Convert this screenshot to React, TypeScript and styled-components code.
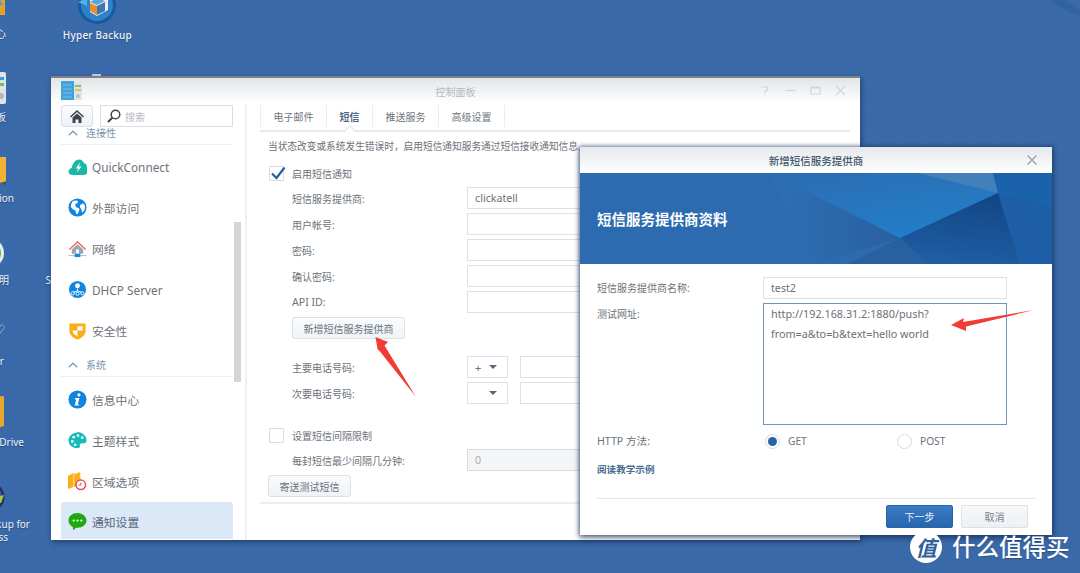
import React from "react";
import styled, { createGlobalStyle } from "styled-components";

const FONT = `"Noto Sans", "Noto Sans CJK SC", "Liberation Sans", sans-serif`;

const Global = createGlobalStyle`
  html, body { margin: 0; padding: 0; width: 1080px; height: 573px; overflow: hidden; }
  body { font-family: ${FONT}; }
`;

const Desktop = styled.div`
  position: relative;
  width: 1080px;
  height: 573px;
  overflow: hidden;
  background-color: #3a6aa9;
  background-image: radial-gradient(#3666a5 0.6px, transparent 0.8px);
  background-size: 3px 3px;
`;

const Glyph = styled.svg<{ $x: number; $y: number }>`
  position: absolute;
  left: ${(p) => p.$x}px;
  top: ${(p) => p.$y}px;
`;

const DeskLabel = styled.div<{ $end: number; $y: number }>`
  position: absolute;
  left: ${(p) => p.$end - 120}px;
  top: ${(p) => p.$y}px;
  width: 120px;
  text-align: right;
  color: #eef3fa;
  font-size: 10px;
  line-height: 14px;
  white-space: nowrap;
  text-shadow: 0 1px 1px rgba(20, 40, 80, 0.5);
`;

const HyperLabel = styled(DeskLabel)`
  letter-spacing: 0.2px;
  font-weight: 500;
`;

const Win = styled.section`
  position: absolute;
  left: 51px;
  top: 76px;
  width: 809px;
  height: 464px;
  display: flex;
  flex-direction: column;
  background: #fff;
  border-top: 2px solid #7f8184;
  box-shadow: 1px 2px 5px rgba(15, 30, 60, 0.55);
  box-sizing: border-box;
  overflow: hidden;
`;

const TitleBar = styled.header`
  position: relative;
  flex: 0 0 26px;
  display: flex;
  align-items: center;
  justify-content: center;
  background: linear-gradient(#e2e5e9, #ffffff 95%);
`;

const WinTitle = styled.span`
  font-size: 10px;
  color: #b4b8bd;
`;

const AppIcon = styled.svg`
  position: absolute;
  left: 10px;
  top: 3px;
`;

const WinControls = styled.div`
  position: absolute;
  top: 7px;
  right: 14px;
  display: flex;
  gap: 14px;
`;

const Body = styled.div`
  flex: 1;
  display: flex;
  min-height: 0;
`;

const Sidebar = styled.aside`
  position: relative;
  flex: 0 0 196px;
  box-sizing: border-box;
  padding: 1px 12px 1px 10px;
  border-right: 2px solid #eff0f2;
  display: flex;
  flex-direction: column;
  overflow: hidden;
`;

const SearchRow = styled.div`
  display: flex;
  gap: 7px;
  flex: 0 0 22px;
  position: relative;
  z-index: 1;
`;

const HomeButton = styled.div`
  flex: 0 0 32px;
  box-sizing: border-box;
  border: 1px solid #d9e0e8;
  border-radius: 3px;
  background: linear-gradient(#fafbfc, #eef2f6);
  display: flex;
  align-items: center;
  justify-content: center;
`;

const SearchBox = styled.div`
  flex: 1;
  box-sizing: border-box;
  border: 1px solid #d7dee6;
  background: #fff;
  display: flex;
  align-items: center;
  gap: 4px;
  padding-left: 6px;
  font-size: 10px;
  color: #b5b9bf;
`;

const NavList = styled.nav`
  flex: 1;
  min-height: 0;
  overflow: hidden;
  display: flex;
  flex-direction: column;
`;

const GroupHead = styled.div<{ $h: number; $mb: number }>`
  flex: 0 0 ${(p) => p.$h}px;
  box-sizing: border-box;
  display: flex;
  align-items: flex-end;
  gap: 8px;
  padding: 0 0 5px 7px;
  margin-bottom: ${(p) => p.$mb}px;
  border-bottom: 1px solid #eceff3;
  font-size: 10px;
  line-height: 12px;
  color: #7d93ad;
`;

const NavItem = styled.div<{ $active?: boolean }>`
  flex: 0 0 41px;
  box-sizing: border-box;
  display: flex;
  align-items: center;
  gap: 5px;
  padding-left: 7px;
  padding-bottom: ${(p) => (p.$active ? 2 : 0)}px;
  border-radius: 3px 3px 0 0;
  font-size: 11.8px;
  color: ${(p) => (p.$active ? "#566779" : "#6d7279")};
  background: ${(p) => (p.$active ? "#dbe8f8" : "transparent")};
`;

const ScrollThumb = styled.div`
  position: absolute;
  left: 183px;
  top: 118px;
  width: 7px;
  height: 160px;
  background: #d4d5d7;
`;

const Panel = styled.main`
  flex: 1;
  min-width: 0;
  padding: 0 10px 0 13px;
  display: flex;
  flex-direction: column;
`;

const TabBar = styled.div`
  flex: 0 0 28px;
  box-sizing: border-box;
  display: flex;
  border-bottom: 2px solid #e8e9eb;
`;

const Tab = styled.div<{ $w: number; $active?: boolean }>`
  position: relative;
  flex: 0 0 ${(p) => p.$w}px;
  height: 22px;
  margin-top: 1px;
  display: flex;
  align-items: center;
  justify-content: center;
  border-left: 1px solid #e9edf2;
  box-sizing: content-box;
  font-size: 10px;
  color: ${(p) => (p.$active ? "#4a6684" : "#6f767e")};
  font-weight: ${(p) => (p.$active ? 700 : 400)};
  &:last-child { border-right: 1px solid #e9edf2; }
  ${(p) =>
    p.$active
      ? `&::after {
          content: "";
          position: absolute;
          left: 50%;
          bottom: -6px;
          width: 7px;
          height: 7px;
          margin-left: -4px;
          background: #fff;
          border-left: 1px solid #e3e5e8;
          border-top: 1px solid #e3e5e8;
          transform: translateY(2px) rotate(45deg);
        }`
      : ""}
`;

const PanelContent = styled.div`
  padding-left: 8px;
  display: flex;
  flex-direction: column;
  overflow: hidden;
  white-space: nowrap;
`;

const Description = styled.p`
  margin: 8px 0 0;
  font-size: 9.7px;
  line-height: 14px;
  color: #6d7279;
`;

const CheckRow = styled.label<{ $mt: number }>`
  display: flex;
  align-items: center;
  gap: 8px;
  margin-top: ${(p) => p.$mt}px;
  height: 16px;
  font-size: 10px;
  color: #6d7279;
  padding-left: 1px;
`;

const CheckBox = styled.span`
  position: relative;
  flex: 0 0 15px;
  height: 15px;
  box-sizing: border-box;
  border: 1px solid #d4dbe4;
  border-radius: 1px;
  background: #fff;
`;

const CheckMark = styled.svg`
  position: absolute;
  left: 0;
  top: -2px;
`;

const FieldStack = styled.div<{ $mt: number }>`
  display: flex;
  flex-direction: column;
  gap: 4px;
  margin-top: ${(p) => p.$mt}px;
`;

const FieldRow = styled.div`
  display: grid;
  grid-template-columns: 175px auto;
  align-items: center;
  padding-left: 24px;
  height: 22px;
  font-size: 10px;
  color: #6d7279;
`;

const Latin = styled.span`
  font-size: 10.6px;
`;

const Controls = styled.div`
  display: flex;
  gap: 12px;
`;

const TextInput = styled.div<{ $disabled?: boolean; $w?: number }>`
  width: ${(p) => p.$w ?? 240}px;
  height: 22px;
  box-sizing: border-box;
  border: 1px solid ${(p) => (p.$disabled ? "#d7dbe0" : "#dbe2ea")};
  background: ${(p) => (p.$disabled ? "#f3f5f7" : "#fff")};
  color: ${(p) => (p.$disabled ? "#a9aeb4" : "#6a7077")};
  font-size: 10.7px;
  line-height: 20px;
  padding-left: 7px;
`;

const SelectBox = styled.div`
  flex: 0 0 41px;
  height: 22px;
  box-sizing: border-box;
  border: 1px solid #dbe2ea;
  display: flex;
  align-items: center;
  justify-content: space-between;
  padding: 0 10px 0 7px;
  font-size: 11px;
  color: #6a7077;
  &::after {
    content: "";
    margin-left: auto;
    border-left: 4px solid transparent;
    border-right: 4px solid transparent;
    border-top: 4px solid #56687c;
  }
`;

const Button = styled.div<{ $w: number; $ml?: number; $mt: number }>`
  width: ${(p) => p.$w}px;
  height: 22px;
  box-sizing: border-box;
  margin-left: ${(p) => p.$ml ?? 0}px;
  margin-top: ${(p) => p.$mt}px;
  border: 1px solid #d9e1e9;
  border-radius: 3px;
  background: linear-gradient(#fafbfc, #eff3f7);
  display: flex;
  align-items: center;
  justify-content: center;
  font-size: 10px;
  color: #68717b;
`;

const PanelDivider = styled.div`
  height: 2px;
  margin-top: 5px;
  background: #eceded;
`;

const Dialog = styled.section`
  position: absolute;
  left: 580px;
  top: 147px;
  width: 472px;
  height: 388px;
  background: #fff;
  display: flex;
  flex-direction: column;
  box-shadow: 0 0 4px 1px rgba(20, 45, 90, 0.6), 0 3px 6px rgba(15, 30, 60, 0.45);
`;

const DialogHeader = styled.header`
  position: relative;
  flex: 0 0 26px;
  display: flex;
  align-items: center;
  justify-content: center;
  background: linear-gradient(#e6e9ed, #ffffff);
  font-size: 10.5px;
  font-weight: 500;
  color: #42566d;
`;

const CloseIcon = styled.svg`
  position: absolute;
  right: 14px;
  top: 7px;
`;

const Banner = styled.div`
  position: relative;
  flex: 0 0 91px;
  display: flex;
  align-items: center;
  padding-left: 17px;
  background: #2c6bb0;
  overflow: hidden;
`;

const BannerArt = styled.svg`
  position: absolute;
  inset: 0;
`;

const BannerTitle = styled.h2`
  position: relative;
  margin: 0;
  color: #fff;
  font-size: 14.5px;
  font-weight: 700;
`;

const DialogForm = styled.div`
  padding: 13px 16px 0 17px;
  display: flex;
  flex-direction: column;
  gap: 4px;
`;

const DialogRow = styled.div<{ $top?: boolean; $mt?: number }>`
  display: grid;
  grid-template-columns: 166px auto;
  align-items: ${(p) => (p.$top ? "start" : "center")};
  margin-top: ${(p) => p.$mt ?? 0}px;
  font-size: 10px;
  color: #6d7279;
  line-height: 22px;
`;

const UrlArea = styled.div`
  width: 244px;
  height: 122px;
  box-sizing: border-box;
  border: 1px solid #6f93bd;
  padding: 0 7px;
  font-size: 10.8px;
  line-height: 20px;
  color: #6a7077;
  white-space: nowrap;
`;

const RadioGroup = styled.div`
  display: grid;
  grid-template-columns: 132px auto;
  padding-left: 2px;
`;

const RadioItem = styled.div`
  display: flex;
  align-items: center;
  gap: 8px;
  height: 15px;
  font-size: 10.2px;
  color: #6d7279;
`;

const Radio = styled.span<{ $on?: boolean }>`
  flex: 0 0 15px;
  height: 15px;
  box-sizing: border-box;
  border: 1px solid #d3dbe5;
  border-radius: 50%;
  background: #fff;
  display: flex;
  align-items: center;
  justify-content: center;
  &::after {
    content: "";
    width: 9px;
    height: 9px;
    border-radius: 50%;
    background: ${(p) => (p.$on ? "#2b62a6" : "transparent")};
  }
`;

const HelpLink = styled.a`
  display: block;
  margin-top: 7px;
  font-size: 9.6px;
  font-weight: 700;
  line-height: 14px;
  color: #4a6d92;
`;

const DialogFooter = styled.footer`
  margin: 21px 16px 0 17px;
  padding: 6px 8px 0 0;
  border-top: 1px solid #e6e7e9;
  display: flex;
  justify-content: flex-end;
  gap: 8px;
`;

const FooterButton = styled.div<{ $primary?: boolean }>`
  width: 67px;
  height: 23px;
  box-sizing: border-box;
  border-radius: 2px;
  border: 1px solid ${(p) => (p.$primary ? "#2862a8" : "#dbe1e8")};
  background: ${(p) =>
    p.$primary ? "linear-gradient(#3b7cc6, #2766ae)" : "linear-gradient(#f7f8fa, #edf0f4)"};
  color: ${(p) => (p.$primary ? "#e9f1fa" : "#777e86")};
  font-size: 10px;
  display: flex;
  align-items: center;
  justify-content: center;
`;

const Overlay = styled.svg`
  position: absolute;
  left: 0;
  top: 0;
  pointer-events: none;
`;

const Watermark = styled.div`
  position: absolute;
  left: 910px;
  top: 531px;
  display: flex;
  align-items: center;
  gap: 10px;
  color: #fff;
`;

const WatermarkBadge = styled.span`
  flex: 0 0 32px;
  height: 32px;
  border-radius: 50%;
  background: #fff;
  color: #2f5f9f;
  display: flex;
  align-items: center;
  justify-content: center;
  font-size: 21px;
  font-weight: 700;
  font-style: italic;
`;

const WatermarkText = styled.span`
  font-size: 23.5px;
  line-height: 30px;
  font-weight: 500;
  letter-spacing: 0;
  text-shadow: 0 1px 1px rgba(20, 40, 80, 0.4);
`;

/* ---------- icons ---------- */

const ChevronUp = () => (
  <svg width="10" height="6" viewBox="0 0 10 6" style={{ marginBottom: 3 }}>
    <path d="M0.8 5.2 5 1.2 9.2 5.2" fill="none" stroke="#7d9ab8" strokeWidth="1.2" />
  </svg>
);

const icons: Record<string, React.ReactNode> = {
  quick: (
    <>
      <path d="M5 19c-3.5 0-4.600-2-4.400-4 .2-2 1.600-3 3.200-3.400C4.500 7 7.600 2.500 11.500 2.500c3 0 5 2 5.500 4.300 2.600-.1 2.800 2 2.600 3.200 1.200 1 1.800 2.400 1.600 4.400-.3 2.800-2 4.600-4.600 4.600z" fill="#1bb8a8" />
      <path d="M12.600 5.800 8.200 12h2.600l-1.400 4.400 4.800-6.400h-2.800z" fill="#fff" />
    </>
  ),
  globe: (
    <>
      <circle cx="10" cy="10" r="9.500" fill="#0f85e0" />
      <path d="M5 3.500c2-1 4.500-1 5.500 0l-.5 2-2 .5-.5 2 1.500 2 2.500.5.5 2.500-2 4-1.500-.5-.5-3-2.500-1.500L3 9.500 3.500 6z" fill="#fff" />
      <path d="M13 7l3-1.500 2 3-.5 4-2.500 3-1-3.500-1.500-2.500z" fill="#fff" />
    </>
  ),
  net: (
    <>
      <path d="M1 10.500 10 2l9 8.500-1 1L10 4 2 11.500z" fill="#f25a5a" />
      <path d="M4 11l6-5.500 6 5.500v4.500H4z" fill="#9aa6b2" />
      <rect x="8.500" y="11" width="3" height="4.500" fill="#fff" />
      <rect x="0.500" y="17" width="19" height="1" fill="#a9b7c6" />
      <rect x="7" y="15.500" width="6" height="3.500" fill="#1b86dc" />
    </>
  ),
  dhcp: (
    <>
      <circle cx="10" cy="10" r="9" fill="#0f85e0" />
      <circle cx="10" cy="6" r="2.600" fill="#fff" />
      <path d="M10 9v3M10 11.500 5.500 13M10 11.500l4.500 1.500" stroke="#fff" strokeWidth="1" fill="none" />
      <circle cx="5" cy="14" r="1.700" fill="none" stroke="#fff" strokeWidth="0.900" />
      <circle cx="10" cy="14.500" r="1.700" fill="none" stroke="#fff" strokeWidth="0.900" />
      <circle cx="15" cy="14" r="1.700" fill="none" stroke="#fff" strokeWidth="0.900" />
    </>
  ),
  shield: (
    <>
      <path d="M1.500 2.500h17v8c0 4-4 7.500-8.500 9-4.500-1.500-8.500-5-8.500-9z" fill="#fbae17" />
      <path d="M10 5.500h5.500v4.500H10zM10 10H5v1.500c.6 2 2.800 3.500 5 4.500z" fill="#fff" />
    </>
  ),
  info: (
    <>
      <circle cx="10" cy="10" r="9.500" fill="#0f85e0" />
      <circle cx="11.500" cy="5.200" r="1.700" fill="#fff" />
      <path d="M7.500 8.500h4.500l-1.700 6.500h1.500l-.4 1.400H7l1.700-6.500H7.200z" fill="#fff" />
    </>
  ),
  palette: (
    <>
      <path d="M10 1.500C4.500 1.500 .5 5.500 .5 10s4 8 9 8c2.500 0 3.500-1 3-2.500-.5-1.500.5-2.500 2-2.500h2c1.800 0 3-1 3-3.500 0-4.500-4.500-8.500-9.500-8.500z" fill="#14bcb8" />
      <circle cx="6" cy="6.500" r="1.400" fill="#fff" />
      <circle cx="10.500" cy="4.800" r="1.400" fill="#fff" />
      <circle cx="15" cy="7" r="1.400" fill="#fff" />
      <circle cx="4.500" cy="11" r="1.400" fill="#fff" />
      <circle cx="7.500" cy="14.500" r="1.400" fill="#fff" />
    </>
  ),
  region: (
    <>
      <path d="M0 4l6-3 1 1 6-2 .5 9-4 6-3.500.5L0 18z" fill="#fbae17" />
      <path d="M6 1.500v15M13 0v7" stroke="#fff" strokeWidth=".6" />
      <circle cx="13.500" cy="13.500" r="5" fill="#fff" stroke="#ee4c50" strokeWidth="1.600" />
      <path d="M13.500 11v2.800h-2.500" stroke="#666" strokeWidth=".9" fill="none" />
    </>
  ),
  chat: (
    <>
      <path d="M10 1C4.500 1 .5 4.500 .5 9c0 3 1.800 5.300 4.500 6.700l.4 3.300 3.500-2.500c.4 0 .7.100 1.100.100 5.500 0 9.500-3.500 9.500-7.600S15.500 1 10 1z" fill="#1fa80f" />
      <circle cx="6" cy="9" r="1.200" fill="#fff" />
      <circle cx="10" cy="9" r="1.200" fill="#fff" />
      <circle cx="14" cy="9" r="1.200" fill="#fff" />
    </>
  ),
};

const NavIcon = ({ name }: { name: string }) => (
  <svg width="19" height="19" viewBox="0 0 20 20" style={{ flex: "0 0 19px" }}>
    {icons[name]}
  </svg>
);

const WinDecor = () => (
  <WinControls>
    <svg width="11" height="11" viewBox="0 0 11 11">
      <path d="M1.500 2h6v3.500H5v2.500M5 9.500v1" fill="none" stroke="#d3d5d8" strokeWidth="1.200" />
    </svg>
    <svg width="11" height="11" viewBox="0 0 11 11">
      <path d="M.5 5.500h10" stroke="#d3d5d8" strokeWidth="1.400" />
    </svg>
    <svg width="11" height="11" viewBox="0 0 11 11">
      <path d="M1 2.500h9v6.500H1z" fill="none" stroke="#d3d5d8" strokeWidth="1.200" />
      <path d="M1 2.500h9" stroke="#d3d5d8" strokeWidth="2" />
    </svg>
    <svg width="11" height="11" viewBox="0 0 11 11">
      <path d="M1 1l9 9M10 1l-9 9" stroke="#d3d5d8" strokeWidth="1.200" />
    </svg>
  </WinControls>
);

const navTop = [
  ["quick", "QuickConnect"],
  ["globe", "外部访问"],
  ["net", "网络"],
  ["dhcp", "DHCP Server"],
  ["shield", "安全性"],
];
const navSys = [
  ["info", "信息中心"],
  ["palette", "主题样式"],
  ["region", "区域选项"],
];

export default function App() {
  return (
    <Desktop>
      <Global />

      {/* desktop icons, mostly cut off by the window edge */}
      <Glyph $x={78} $y={-14} width="38" height="38" viewBox="0 0 38 38">
        <circle cx="19" cy="19" r="19" fill="#175a9e" />
        <circle cx="19" cy="19" r="16" fill="#2c83c9" />
        <path d="M19 8l11 4v12l-11 6-7-4V12z" fill="#ececec" />
        <path d="M19 12l8 3-8 4-7-3z" fill="#5aa6d8" />
        <path d="M12 17l7 3v9l-7-4z" fill="#ec8a2c" />
        <path d="M19 20l8-4v9l-8 4z" fill="#3a78ad" />
        <path d="M0 16l9-4v8z" fill="#52b0ea" />
      </Glyph>
      <HyperLabel $end={132} $y={28}>Hyper Backup</HyperLabel>
      <Glyph $x={92} $y={74} width="9" height="2" viewBox="0 0 9 2">
        <rect width="9" height="2" fill="#c9d6e8" />
      </Glyph>
      <Glyph $x={-8} $y={-8} width="14" height="24" viewBox="0 0 14 24">
        <path d="M0 0h13v23H0z" fill="#e8a02d" />
        <path d="M5 2l6 11H0z" fill="#39a6de" />
      </Glyph>
      <DeskLabel $end={6} $y={27}>套件中心</DeskLabel>

      <Glyph $x={-16} $y={72} width="22" height="32" viewBox="0 0 22 32">
        <rect width="22" height="32" rx="2" fill="#dfe3e8" />
        <rect x="14" y="5" width="6" height="3" fill="#3b9ad7" />
        <rect x="14" y="11" width="6" height="3" fill="#69c36b" />
        <circle cx="17" cy="24" r="3" fill="#b0b6bd" />
      </Glyph>
      <DeskLabel $end={6} $y={110}>控制面板</DeskLabel>

      <Glyph $x={-14} $y={157} width="20" height="30" viewBox="0 0 20 30">
        <path d="M0 0h20v26l-4-1-16 5z" fill="#f2b233" />
        <path d="M20 24v5l-4-3z" fill="#44525f" />
      </Glyph>
      <DeskLabel $end={14} $y={191}>Application</DeskLabel>

      <Glyph $x={-26} $y={238} width="30" height="30" viewBox="0 0 30 30">
        <circle cx="15" cy="15" r="15" fill="#e9ecef" />
        <circle cx="15" cy="15" r="12" fill="#63b640" />
      </Glyph>
      <DeskLabel $end={9} $y={273}>说明</DeskLabel>
      <DeskLabel $end={51} $y={273}>S</DeskLabel>

      <DeskLabel $end={5} $y={322}>♡</DeskLabel>
      <DeskLabel $end={4} $y={354}>Server</DeskLabel>

      <Glyph $x={-16} $y={396} width="20" height="36" viewBox="0 0 20 36">
        <path d="M0 1l20-1v30L0 36z" fill="#e7a72c" />
        <path d="M6 1h7v32l-7 1z" fill="#7ab648" />
      </Glyph>
      <DeskLabel $end={24} $y={435}>Cloud Drive</DeskLabel>

      <Glyph $x={-24} $y={482} width="29" height="30" viewBox="0 0 29 30">
        <circle cx="14" cy="15" r="14.500" fill="#27305e" />
        <circle cx="14" cy="15" r="12" fill="#3c5fc4" />
        <path d="M4 19l24-6-3 8z" fill="#a8c73a" />
      </Glyph>
      <DeskLabel $end={30} $y={517}>Active Backup for</DeskLabel>
      <DeskLabel $end={8} $y={530}>Business</DeskLabel>

      <Glyph $x={1048} $y={0} width="32" height="16" viewBox="0 0 32 16">
        <path d="M2 0h14l16 10v6C22 12 10 7 2 0z" fill="#2f5f9f" opacity=".7" />
      </Glyph>

      <Win>
        <TitleBar>
          <AppIcon width="21" height="19" viewBox="0 0 21 19">
            <rect width="13" height="19" fill="#43a2dc" />
            <rect x="13" y="1" width="8" height="18" fill="#dfe4e8" />
            <path d="M2 4h9M2 8h9M2 12h9M2 16h9" stroke="#86c6ec" strokeWidth=".8" />
            <rect x="14" y="4" width="6" height="2" fill="#7dc17c" />
            <rect x="14" y="8" width="6" height="2" fill="#e7c24a" />
            <circle cx="17" cy="15" r="2" fill="#b8bec4" />
          </AppIcon>
          <WinTitle>控制面板</WinTitle>
          <WinDecor />
        </TitleBar>
        <Body>
          <Sidebar>
            <SearchRow>
              <HomeButton>
                <svg width="14" height="13" viewBox="0 0 14 13">
                  <path d="M7 0 0 6.500l1 1L7 2l6 5.500 1-1z" fill="#3d444c" />
                  <path d="M2.500 7.500 7 3.500l4.500 4V13H8.500V9.500h-3V13h-3z" fill="#3d444c" />
                </svg>
              </HomeButton>
              <SearchBox>
                <svg width="14" height="14" viewBox="0 0 14 14">
                  <circle cx="8.500" cy="5.500" r="4.300" fill="none" stroke="#3d444c" strokeWidth="1.500" />
                  <path d="M5.300 8.800 1 13" stroke="#3d444c" strokeWidth="2" />
                </svg>
                搜索
              </SearchBox>
            </SearchRow>
            <NavList>
              <GroupHead $h={16} $mb={1}>
                <ChevronUp />
                连接性
              </GroupHead>
              {navTop.map(([icon, label]) => (
                <NavItem key={label}>
                  <NavIcon name={icon} />
                  {label}
                </NavItem>
              ))}
              <GroupHead $h={26} $mb={2}>
                <ChevronUp />
                系统
              </GroupHead>
              {navSys.map(([icon, label]) => (
                <NavItem key={label}>
                  <NavIcon name={icon} />
                  {label}
                </NavItem>
              ))}
              <NavItem $active>
                <NavIcon name="chat" />
                通知设置
              </NavItem>
            </NavList>
            <ScrollThumb />
          </Sidebar>
          <Panel>
            <TabBar>
              <Tab $w={65}>电子邮件</Tab>
              <Tab $w={45} $active>短信</Tab>
              <Tab $w={65}>推送服务</Tab>
              <Tab $w={65}>高级设置</Tab>
            </TabBar>
            <PanelContent>
              <Description>当状态改变或系统发生错误时，启用短信通知服务通过短信接收通知信息。</Description>
              <CheckRow $mt={11}>
                <CheckBox>
                  <CheckMark width="17" height="16" viewBox="0 0 17 16">
                    <path d="M2 8.500l4.500 4.500L14.500 2.500" fill="none" stroke="#2c5f9e" strokeWidth="2.200" />
                  </CheckMark>
                </CheckBox>
                启用短信通知
              </CheckRow>
              <FieldStack $mt={6}>
                <FieldRow>短信服务提供商:<TextInput>clickatell</TextInput></FieldRow>
                <FieldRow>用户帐号:<TextInput /></FieldRow>
                <FieldRow>密码:<TextInput /></FieldRow>
                <FieldRow>确认密码:<TextInput /></FieldRow>
                <FieldRow><Latin>API ID:</Latin><TextInput /></FieldRow>
              </FieldStack>
              <Button $w={113} $ml={24} $mt={4}>新增短信服务提供商</Button>
              <FieldStack $mt={17}>
                <FieldRow>
                  主要电话号码:
                  <Controls>
                    <SelectBox>+</SelectBox>
                    <TextInput />
                  </Controls>
                </FieldRow>
                <FieldRow>
                  次要电话号码:
                  <Controls>
                    <SelectBox />
                    <TextInput />
                  </Controls>
                </FieldRow>
              </FieldStack>
              <CheckRow $mt={23}>
                <CheckBox />
                设置短信间隔限制
              </CheckRow>
              <FieldStack $mt={6}>
                <FieldRow>每封短信最少间隔几分钟:<TextInput $disabled>0</TextInput></FieldRow>
              </FieldStack>
              <Button $w={83} $mt={4}>寄送测试短信</Button>
            </PanelContent>
            <PanelDivider />
          </Panel>
        </Body>
      </Win>

      <Dialog>
        <DialogHeader>
          新增短信服务提供商
          <CloseIcon width="12" height="12" viewBox="0 0 12 12">
            <path d="M1.500 1.500l9 9M10.500 1.500l-9 9" stroke="#9aa1a9" strokeWidth="1.300" />
          </CloseIcon>
        </DialogHeader>
        <Banner>
          <BannerArt width="472" height="91" viewBox="0 0 472 91">
            <defs>
              <linearGradient id="g1" x1="0.2" y1="0" x2="0.8" y2="1">
                <stop offset="0" stopColor="#2b6eb4" />
                <stop offset="1" stopColor="#2180ca" />
              </linearGradient>
              <linearGradient id="g2" x1="0" y1="0" x2="1" y2="0">
                <stop offset="0" stopColor="#2d70b6" />
                <stop offset="1" stopColor="#2a5f9f" />
              </linearGradient>
              <linearGradient id="g3" x1="0.7" y1="0" x2="0.5" y2="1">
                <stop offset="0" stopColor="#124684" />
                <stop offset="1" stopColor="#1f5da5" />
              </linearGradient>
            </defs>
            <rect width="472" height="91" fill="#2c6bb0" />
            <path d="M190 0 320 65 235 91z" fill="url(#g2)" />
            <path d="M190 0H338L418 20 320 65z" fill="url(#g1)" />
            <path d="M338 0H413L418 20z" fill="#4380bb" />
            <path d="M413 0H472V32L418 20z" fill="#1a62aa" />
            <path d="M418 20 472 32V65z" fill="#1c5fa6" />
            <path d="M418 20 472 65V91H440z" fill="#1e5ea6" />
            <path d="M418 20 440 91H348L320 65z" fill="url(#g3)" />
            <path d="M320 65 348 91H268z" fill="#29609f" />
          </BannerArt>
          <BannerTitle>短信服务提供商资料</BannerTitle>
        </Banner>
        <DialogForm>
          <DialogRow>
            短信服务提供商名称:
            <TextInput $w={244}>test2</TextInput>
          </DialogRow>
          <DialogRow $top>
            测试网址:
            <UrlArea>
              http://192.168.31.2:1880/push?
              <br />
              from=a&amp;to=b&amp;text=hello world
            </UrlArea>
          </DialogRow>
          <DialogRow $mt={1}>
            <Latin>HTTP 方法:</Latin>
            <RadioGroup>
              <RadioItem><Radio $on />GET</RadioItem>
              <RadioItem><Radio />POST</RadioItem>
            </RadioGroup>
          </DialogRow>
          <HelpLink>阅读教学示例</HelpLink>
        </DialogForm>
        <DialogFooter>
          <FooterButton $primary>下一步</FooterButton>
          <FooterButton>取消</FooterButton>
        </DialogFooter>
      </Dialog>

      <Overlay width="1080" height="573" viewBox="0 0 1080 573">
        <path d="M375.500 337 388 342 384.500 345.500 416 397 380 351.500 377.500 349z" fill="#f33b35" />
        <path d="M951 325 964 318 963 322 1034 310 966 326.500 966 331z" fill="#f33b35" />
      </Overlay>

      <Watermark>
        <WatermarkBadge>值</WatermarkBadge>
        <WatermarkText>什么值得买</WatermarkText>
      </Watermark>
    </Desktop>
  );
}
